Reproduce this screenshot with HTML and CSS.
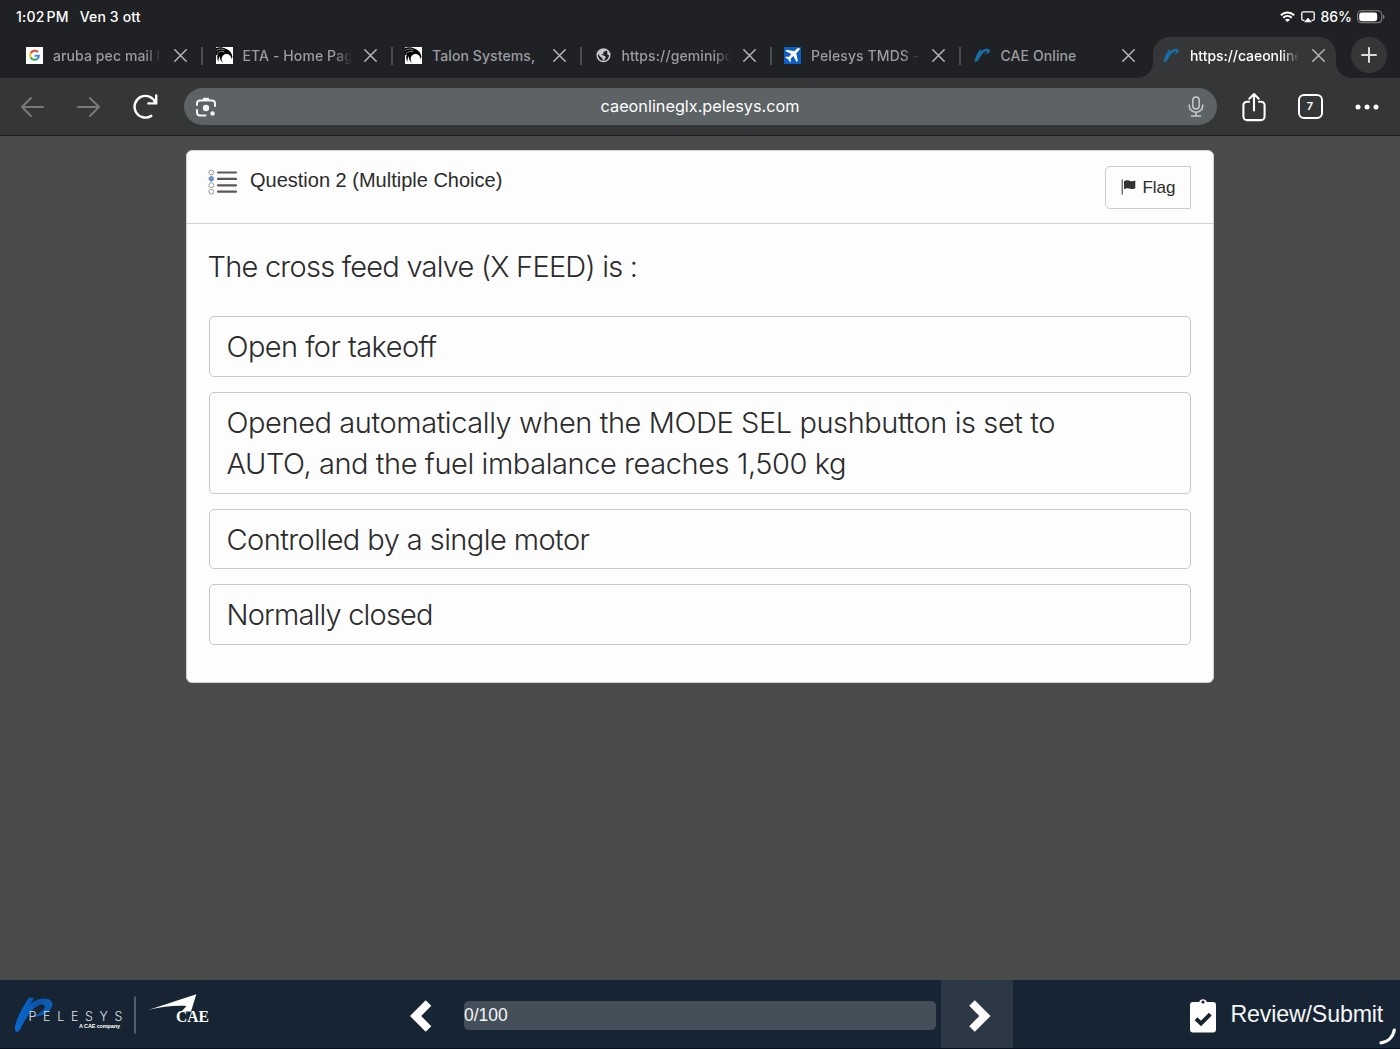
FILE: index.html
```html
<!DOCTYPE html>
<html lang="it">
<head>
<meta charset="utf-8">
<title>CAE Online</title>
<link rel="stylesheet" href="styles.css">
</head>
<body>
<svg class="defs" aria-hidden="true">
  <defs>
    <symbol id="close" viewBox="0 0 13 13"><path d="M.8.8l11.4 11.4M12.2.8L.8 12.2" fill="none" stroke="currentColor" stroke-width="1.5" stroke-linecap="round"/></symbol>
    <symbol id="talon" viewBox="0 0 17 17"><path d="M0 0h17v17H0z" fill="#fff"/><path d="M0 1C3-.3 7 0 10 1.800c3.500 1.500 5.800 4 6.500 8.200L13 15.500H7C4.500 14 3.500 11.500 4 9c-1.300 1.500-1.700 3.500-1.300 6C1 12.500.8 9.500 2 7L0 8.500z" fill="#050505"/><circle cx="10.500" cy="12" r="4.900" fill="#fff"/><path d="M.3 3.500C3 1.800 6 1.700 8.500 3M1 6.500C3 4.500 5.500 4 8 4.800" fill="none" stroke="#ddd" stroke-width=".6"/></symbol>
    <symbol id="pmark" viewBox="0 0 17 17"><path d="M4.500 3.300l3-.6-1.500 2.500C8 3 12 1 15 2.200c2.500 1.700-.6 5.300-5 5.500 1-.5 3.800-2.300 3-3.300C11 3.300 7 7.500 4 14L.7 15.300C.5 12 3 7 5 4z" fill="#176fa5"/></symbol>
  </defs>
</svg>

<header class="browser">
  <div class="status">
    <span class="status-time">1:02<span class="thin-gap"></span>PM</span>
    <span class="status-date">Ven 3 ott</span>
    <svg class="wifi" viewBox="0 0 15 11"><g fill="none" stroke="#fff" stroke-width="1.900"><path d="M.8 4.200c3.800-3.700 9.600-3.700 13.400 0"/><path d="M3.200 6.700c2.500-2.400 6.100-2.400 8.600 0"/></g><path d="M5 8.700c1.500-1.200 3.500-1.200 5 0L7.500 11z" fill="#fff"/></svg>
    <svg class="airplay" viewBox="0 0 14 12"><path d="M3.500 9.300H2.300A1.500 1.500 0 0 1 .8 7.800V2.300A1.500 1.500 0 0 1 2.300.8h9.400a1.500 1.500 0 0 1 1.500 1.500v5.500a1.500 1.500 0 0 1-1.500 1.500h-1.200" fill="none" stroke="#fff" stroke-width="1.300"/><path d="M7 6.800l4 4.400H3z" fill="#fff"/></svg>
    <span class="status-battery">86%</span>
    <svg class="battery" viewBox="0 0 29 14"><rect x=".6" y=".6" width="25" height="12.300" rx="4" fill="none" stroke="#85868a" stroke-width="1.100"/><rect x="2.300" y="2.300" width="18.600" height="9" rx="2.500" fill="#fff"/><path d="M27 4.600c2 .6 2 3.900 0 4.500z" fill="#85868a"/></svg>
  </div>

  <nav class="tabs">
    <div class="tab"><svg class="favicon" viewBox="0 0 17 17"><path d="M0 0h17v17H0z" fill="#fff"/><g fill="none" stroke-width="2"><path d="M12 5A4.500 4.500 0 0 0 4.700 6.300" stroke="#ea4335"/><path d="M4.700 6.300a4.500 4.500 0 0 0 0 4.300" stroke="#fbbc05"/><path d="M4.700 10.600a4.500 4.500 0 0 0 6.600 1.300" stroke="#34a853"/><path d="M11.300 11.900A4.500 4.500 0 0 0 12.900 8.700H8.600" stroke="#4285f4"/></g></svg><span class="label">aruba pec mail l</span><svg class="close"><use href="#close"/></svg></div>
    <div class="tab"><svg class="favicon"><use href="#talon"/></svg><span class="label">ETA - Home Pag</span><svg class="close"><use href="#close"/></svg></div>
    <div class="tab"><svg class="favicon"><use href="#talon"/></svg><span class="label full">Talon Systems,</span><svg class="close"><use href="#close"/></svg></div>
    <div class="tab"><svg class="favicon" viewBox="0 0 17 17"><circle cx="8.500" cy="8.300" r="6.300" fill="#202124" stroke="#c6c8cb" stroke-width="1.500"/><path d="M3 5l3-2.500 5-.3-.5 2-2.300.8.300 1.500L6.500 8l2.500.5L11 10l-1.500 2.500L8 14l-.8-3L5 9.500 3.200 7zM12 5l2.300.5.3 3-2.100-.7z" fill="#c6c8cb"/></svg><span class="label">https://geminipo</span><svg class="close"><use href="#close"/></svg></div>
    <div class="tab"><svg class="favicon" viewBox="0 0 17 17"><path d="M0 0h17v17H0z" fill="#0b5fc4"/><path d="M15.500 1.300c-1-.8-2.500.2-3.600 1.400L10.300 4.200 2.700 2.700 1.400 4l6 3.100-2.700 2.800-2.500-.3-1 1 3 1.700 1.700 3 1-1-.3-2.500 2.800-2.700 3.100 6 1.300-1.300-1.500-7.600 1.500-1.500c1.100-1.100 2.400-2.500 1.700-3.400z" fill="#fff"/></svg><span class="label">Pelesys TMDS -</span><svg class="close"><use href="#close"/></svg></div>
    <div class="tab last"><svg class="favicon"><use href="#pmark"/></svg><span class="label full">CAE Online</span><svg class="close"><use href="#close"/></svg></div>
    <div class="tab active"><svg class="favicon"><use href="#pmark"/></svg><span class="label">https://caeonline</span><svg class="close"><use href="#close"/></svg></div>
    <button class="new-tab" aria-label="Nuova scheda"><svg viewBox="0 0 16 16"><path d="M8 1v14M1 8h14" stroke="#dadce0" stroke-width="2" stroke-linecap="round"/></svg></button>
  </nav>

  <div class="toolbar">
    <svg class="nav-icon dim" viewBox="0 0 24 24"><path d="M23 12H2M11 3L2 12l9 9" fill="none" stroke="currentColor" stroke-width="2" stroke-linecap="round" stroke-linejoin="round"/></svg>
    <svg class="nav-icon dim" viewBox="0 0 24 24"><path d="M1 12h21M13 3l9 9-9 9" fill="none" stroke="currentColor" stroke-width="2" stroke-linecap="round" stroke-linejoin="round"/></svg>
    <svg class="nav-icon" viewBox="0 0 24 24"><path d="M22.300 1.500v7.500h-7.500M21.600 8.500A10.400 10.400 0 1 0 17.500 21" fill="none" stroke="currentColor" stroke-width="2.300" stroke-linecap="round" stroke-linejoin="round"/></svg>
    <div class="omnibox">
      <svg class="lens" viewBox="0 0 20 20"><g fill="none" stroke="#f1f3f4" stroke-width="2" stroke-linecap="round"><path d="M1 8V6.500A3 3 0 0 1 4 3.500h12a3 3 0 0 1 3 3V9M1 13v2.500a3 3 0 0 0 3 3h5.500"/></g><path d="M6 3.500L7.500.8h5L14 3.500z" fill="#f1f3f4"/><circle cx="10" cy="11" r="3.200" fill="#f1f3f4"/><circle cx="16.500" cy="16.500" r="2.200" fill="#f1f3f4"/></svg>
      <span class="url">caeonlineglx.pelesys.com</span>
      <svg class="mic" viewBox="0 0 16 21"><g fill="none" stroke="#c6c9cc" stroke-width="1.500" stroke-linecap="round"><rect x="4.800" y="1" width="6.400" height="12" rx="3.200"/><path d="M1.300 9v1a6.700 6.200 0 0 0 13.400 0V9M8 16.300v3.500M3.500 20h9"/></g></svg>
    </div>
    <svg class="share" viewBox="0 0 24 30"><g fill="none" stroke="#fff" stroke-width="2.100" stroke-linecap="round" stroke-linejoin="round"><path d="M7 9.800H5A3.600 3.600 0 0 0 1.400 13.400V24.500A3.600 3.600 0 0 0 5 28.100h14a3.600 3.600 0 0 0 3.600-3.600V13.400A3.600 3.600 0 0 0 19 9.800h-2M12 18.500V2.500M7.300 6.800L12 2.100l4.700 4.700"/></g></svg>
    <span class="tab-count">7</span>
    <svg class="more" viewBox="0 0 24 6"><g fill="#fff"><circle cx="3" cy="3" r="2.500"/><circle cx="12" cy="3" r="2.500"/><circle cx="21" cy="3" r="2.500"/></g></svg>
  </div>
</header>

<main class="page">
  <section class="card">
    <div class="card-head">
      <svg class="list-icon" viewBox="0 0 30 26"><g fill="#fff" stroke="#999" stroke-width="1"><circle cx="3.300" cy="3.500" r="2.400"/><circle cx="3.300" cy="9.800" r="2.400" fill="#3b8ee8"/><circle cx="3.300" cy="16.200" r="2.400"/><circle cx="3.300" cy="22.700" r="2.400"/></g><path d="M1.800 9l1.500 1.200 2-2" fill="none" stroke="#9cc8f8" stroke-width=".6"/><path d="M10 3.500h18M10 9.900h18M10 16.300h18M10 22.700h18" stroke="#5b5759" stroke-width="2.200" stroke-linecap="round"/></svg>
      <h1>Question 2 (Multiple Choice)</h1>
      <button class="flag"><svg viewBox="0 0 15 16"><path d="M1.200.5v15" stroke="#333" stroke-width="1"/><path d="M3 2.300c3-1.600 4.500-1 6.300-.4 1.700.5 3.200.4 5-.5v7.800c-2 1-3.500 1.100-5 .6-2-.7-3.500-1-6.300.4z" fill="#333"/></svg>Flag</button>
    </div>
    <div class="card-body">
      <p class="question">The cross feed valve (X FEED) is :</p>
      <ul class="options">
        <li class="tight">Open for takeoff</li>
        <li>Opened automatically when the MODE SEL pushbutton is set to<br>AUTO, and the fuel imbalance reaches 1,500 kg</li>
        <li class="tight">Controlled by a single motor</li>
        <li class="tighter">Normally closed</li>
      </ul>
    </div>
  </section>
</main>

<footer class="bottom">
  <svg class="logos" viewBox="0 0 210 68">
    <defs><linearGradient id="ink" x1="0" x2="1"><stop offset="0" stop-color="#0869cf"/><stop offset=".6" stop-color="#0a55ad"/><stop offset="1" stop-color="#1060b8"/></linearGradient></defs>
    <path d="M29 17.500L34 18l-3.500 6c6-5 13-6.500 18-4.800 7 3.500 4 11-4.500 15-5 2.400-10 3-15 2.800 7-1.500 12-4 15-8 2-3 0-5.500-4.500-4-5 2-9.500 7-12.800 12.800-3.500 6-5.500 9-7.200 13L17 52c-3-1-2.500-6 0-12 3-8 7-15 12-22.500z" fill="url(#ink)"/>
    <text x="28.500" y="41" textLength="94" font-family="Inter, sans-serif" fill="#dfe3e8" font-size="12.500" font-weight="300">PELESYS</text>
    <text x="79" y="48" font-family="Liberation Sans, sans-serif" font-size="5.500" font-weight="700" fill="#fff" textLength="41">A CAE company</text>
    <path d="M135 16.500v37" stroke="#7d858e" stroke-width="1.200"/>
    <path d="M149 29.800L196.300 14.200 191 31.500h-9.500l5-5.500C176 25 163 26.500 149 29.800z" fill="#fff"/>
    <text x="176" y="41.800" font-family="Liberation Serif, serif" font-size="16" font-weight="700" fill="#fff" textLength="33" lengthAdjust="spacingAndGlyphs">CAE</text>
  </svg>
  <button class="prev" aria-label="Indietro"><svg viewBox="0 0 22 32"><path d="M0 16L15.700.3l5.600 5.500L11.200 16l10.100 10.200-5.600 5.500z" fill="#fff"/></svg></button>
  <div class="progress">0/100</div>
  <button class="next" aria-label="Avanti"><svg viewBox="0 0 22 32"><path d="M21.500 16L5.800.3.2 5.800 10.300 16 .2 26.200l5.600 5.500z" fill="#fff"/></svg></button>
  <button class="review"><svg viewBox="0 0 26 35"><path d="M3 4h6.200a4 4 0 0 1 7.600 0H23a3 3 0 0 1 3 3v24.500a3 3 0 0 1-3 3H3a3 3 0 0 1-3-3V7a3 3 0 0 1 3-3z" fill="#fff"/><circle cx="13" cy="4" r="1.600" fill="#172433"/><path d="M6 20.700l5 4.800 9.300-9.300" fill="none" stroke="#172433" stroke-width="4"/></svg><span>Review/Submit</span></button>
  <svg class="pencil-arc" viewBox="0 0 18 18"><path d="M15.300 2C14 9 9 14 2 14.800" fill="none" stroke="#fff" stroke-width="3.200" stroke-linecap="round"/></svg>
</footer>
</body>
</html>
```
FILE: styles.css
```css
* { box-sizing: border-box; }

body {
  margin: 0;
  width: 1400px;
  height: 1049px;
  display: flex;
  flex-direction: column;
  overflow: hidden;
  background: #4b4b4b;
  font-family: "Liberation Sans", Arial, sans-serif;
}

svg { display: block; flex: none; }
.defs { position: absolute; width: 0; height: 0; }

button {
  border: 0;
  padding: 0;
  background: none;
  color: inherit;
  font: inherit;
  display: flex;
  align-items: center;
  justify-content: center;
}

/* Browser chrome */
.browser {
  background: #202124;
  font-family: Inter, sans-serif;
}

.status {
  height: 33px;
  padding: 0 15px 0 16px;
  display: flex;
  align-items: center;
  color: #fff;
  font-size: 14px;
  font-weight: 500;
  white-space: nowrap;
}
.status-time { letter-spacing: 0.2px; }
.thin-gap { display: inline-block; width: 2px; }
.status-date { margin-left: 11px; letter-spacing: 0.15px; }
.wifi { width: 15px; height: 11px; margin-left: auto; }
.airplay { width: 14px; height: 12px; margin-left: 6px; }
.status-battery { margin-left: 5px; }
.battery { width: 28px; height: 14px; margin-left: 5px; }

.tabs {
  height: 45px;
  padding-left: 13.5px;
  display: flex;
}

.tab {
  position: relative;
  width: 189.5px;
  height: 45px;
  padding-left: 12.5px;
  display: flex;
  align-items: center;
  color: #9a9da1;
  font-size: 14px;
  font-weight: 450;
  letter-spacing: 0.1px;
}
.tab::after {
  content: "";
  width: 2px;
  height: 18px;
  margin-left: 14px;
  background: #4b4c4f;
}
.favicon { width: 17px; height: 17px; }
.label {
  width: 109px;
  margin-left: 10px;
  white-space: nowrap;
  -webkit-mask-image: linear-gradient(90deg, #000 84%, transparent);
  mask-image: linear-gradient(90deg, #000 84%, transparent);
}
.label.full { -webkit-mask-image: none; mask-image: none; }
.close { width: 13px; height: 13px; margin-left: 12.5px; color: #b4b7ba; }
.tab.last::after { visibility: hidden; }

.tab.active {
  width: 183px;
  height: 41px;
  margin: 4px 0 0 2.5px;
  padding: 0 0 4px 10px;
  border-radius: 17px 17px 0 0;
  background: #353638;
  color: #fff;
  letter-spacing: -0.05px;
}
.tab.active::before,
.tab.active::after {
  content: "";
  position: absolute;
  bottom: 0;
  width: 15px;
  height: 15px;
  margin: 0;
}
.tab.active::before {
  left: -15px;
  background: radial-gradient(circle at 0 0, transparent 14.5px, #353638 15px);
}
.tab.active::after {
  right: -15px;
  background: radial-gradient(circle at 100% 0, transparent 14.5px, #353638 15px);
}

.new-tab {
  width: 36px;
  height: 36px;
  margin: 4px 0 0 14.5px;
  border-radius: 50%;
  background: #353638;
}
.new-tab svg { width: 16px; height: 16px; }

.toolbar {
  height: 58px;
  padding: 0 20px;
  display: flex;
  align-items: center;
  background: #353638;
  border-bottom: 1px solid #1d1d1e;
  color: #fff;
}
.nav-icon { width: 24px; height: 24px; margin-right: 32.5px; }
.nav-icon.dim { color: #77797b; }
.nav-icon:nth-child(3) { width: 25px; height: 25px; margin-right: 25.5px; }
.omnibox {
  width: 1033px;
  height: 37px;
  padding: 0 12px;
  display: flex;
  align-items: center;
  justify-content: space-between;
  border-radius: 19px;
  background: #5d6265;
}
.lens { width: 20px; height: 20px; }
.url { margin: -2px 4px 0 0; font-size: 16.25px; }
.mic { width: 16px; height: 21px; }
.share { width: 24px; height: 30px; margin-left: 25px; }
.tab-count {
  width: 25px;
  height: 25px;
  margin-left: 32px;
  border: 2px solid #fff;
  border-radius: 6px;
  font-size: 11px;
  font-weight: 600;
  line-height: 21px;
  text-align: center;
}
.more { width: 24px; height: 6px; margin-left: 32px; }

/* Question card */
.page {
  flex: 1;
  padding: 14px 186px 0;
}
.card {
  width: 1028px;
  height: 533px;
  border: 1px solid #d0d0d0;
  border-radius: 6px;
  background: #fdfdfd;
  color: #2b2b2b;
}
.card-head {
  height: 73px;
  padding: 15px 22px 0 21px;
  display: flex;
  border-bottom: 1px solid #d2d2d2;
}
.list-icon { width: 30px; height: 26px; margin-top: 3px; }
h1 {
  margin: 3px 0 0 12px;
  font-size: 20px;
  font-weight: 400;
  line-height: 23px;
}
.flag {
  width: 86px;
  height: 43px;
  margin-left: auto;
  padding-left: 1px;
  gap: 6px;
  border: 1.5px solid #ccc;
  border-radius: 5px 0 0 5px;
  font-size: 17px;
}
.flag svg { width: 15px; height: 16px; margin-top: -2px; }

.card-body {
  padding: 22px 22px 0 21.5px;
  font-family: Inter, sans-serif;
  font-size: 29px;
  font-weight: 300;
  line-height: 41.5px;
}
.question { margin: 0 0 0 -1px; letter-spacing: -0.77px; }
.options {
  margin: 28.5px 0 0;
  padding: 0;
  display: flex;
  flex-direction: column;
  gap: 15px;
  list-style: none;
}
.options li {
  padding: 9px 17px 8px;
  border: 1px solid #c9c9c9;
  border-radius: 5px;
  letter-spacing: -0.42px;
  white-space: nowrap;
}
.options .tight { letter-spacing: -0.57px; }
.options .tighter { letter-spacing: -0.82px; }

/* Bottom navigation */
.bottom {
  position: relative;
  height: 69px;
  display: flex;
  align-items: center;
  background: #172433;
  border-bottom: 1px solid #07111d;
  color: #f5f6f7;
}
.logos { width: 210px; height: 68px; }
.prev { margin-left: 200px; }
.prev svg, .next svg { width: 22px; height: 32px; }
.progress {
  width: 472px;
  height: 29px;
  margin: 2px 0 0 32px;
  border-radius: 5px;
  background: #454f5a;
  font-size: 17.5px;
  line-height: 29px;
}
.next {
  width: 72px;
  height: 68px;
  margin-left: 5px;
  padding-left: 5px;
  background: #2c3846;
}
.next svg, .prev svg { margin-top: 3px; }
.review { margin-left: 177px; gap: 14.5px; font-size: 23.2px; letter-spacing: -0.16px; }
.review svg { width: 26px; height: 35px; margin-top: 2px; }
.review span { margin-top: 1px; }
.pencil-arc { position: absolute; right: 3px; bottom: 2px; width: 18px; height: 18px; }
```
